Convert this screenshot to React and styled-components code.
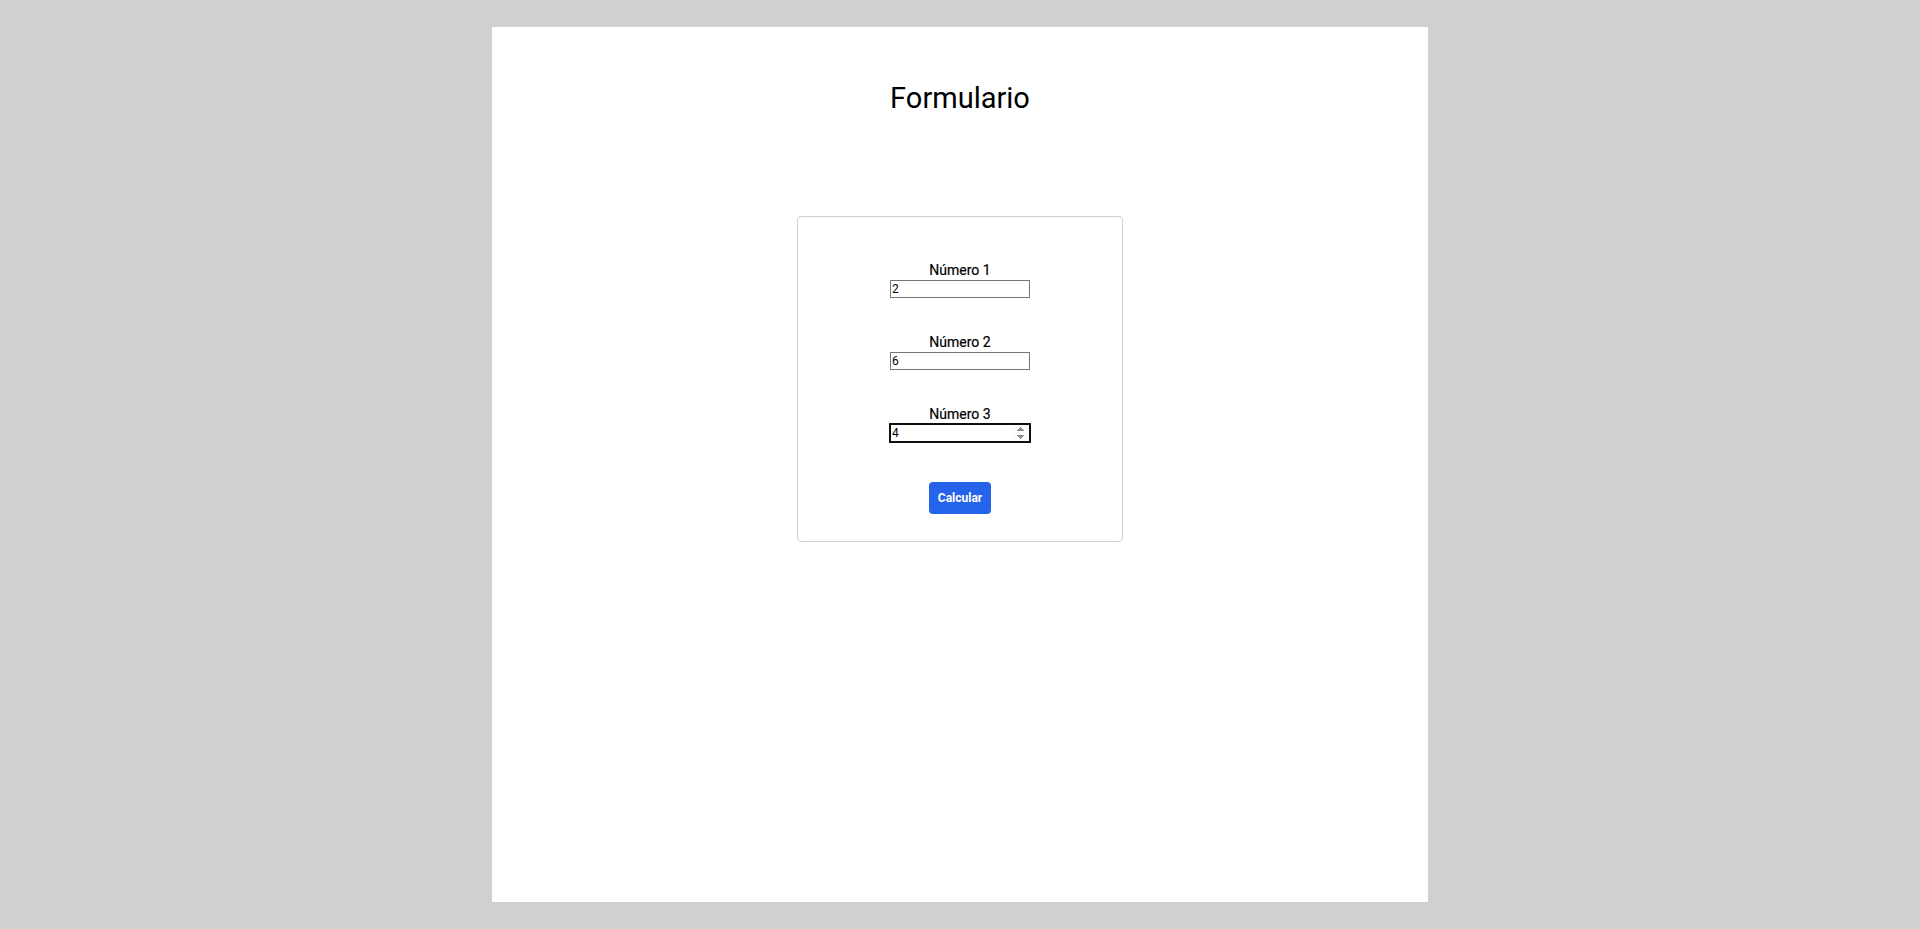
import React from 'react'
import styled, { createGlobalStyle } from 'styled-components'

const GlobalStyle = createGlobalStyle`
  html, body {
    margin: 0;
    padding: 0;
    background-color: #d0d0d0;
    font-family: Roboto, "Liberation Sans", Arial, sans-serif;
    color: #000;
  }
`

const Page = styled.div`
  box-sizing: border-box;
  width: 936px;
  height: calc(100vh - 54px);
  margin: 27px auto;
  background-color: #fff;
  display: flex;
  flex-direction: column;
  align-items: center;
  padding-top: 55px;
`

const Title = styled.h1`
  margin: 0;
  font-size: 29px;
  font-weight: 400;
  line-height: 33px;
`

const Card = styled.form`
  box-sizing: border-box;
  width: 326px;
  margin-top: 101px;
  border: 1px solid #cfcfcf;
  border-radius: 4px;
  padding: 44px 0 27px;
  display: flex;
  flex-direction: column;
  align-items: center;
  gap: 35px;
`

const Field = styled.div`
  display: flex;
  flex-direction: column;
  align-items: center;
`

const Label = styled.label`
  font-size: 14px;
  font-weight: 400;
  line-height: 19px;
  color: #000;
  -webkit-text-stroke: 0.2px #000;
`

const Input = styled.input`
  box-sizing: border-box;
  width: 140px;
  height: 18px;
  margin: 0;
  padding: 0 1px;
  border: 1px solid #767676;
  border-radius: 0;
  font-family: Roboto, "Liberation Sans", Arial, sans-serif;
  font-size: 12px;
  color: #000;
  background: #fff;
  outline: ${p => (p.$active ? '2px solid #101010' : 'none')};
  outline-offset: -1px;
`

const Button = styled.button`
  margin-top: 5px;
  height: 32px;
  padding: 0 9px;
  border: none;
  border-radius: 4px;
  background-color: #2563eb;
  color: #fff;
  font-family: Roboto, "Liberation Sans", Arial, sans-serif;
  font-size: 12px;
  font-weight: 700;
  cursor: pointer;
`

const fields = [
  { id: 'n1', label: 'Número 1', value: '2' },
  { id: 'n2', label: 'Número 2', value: '6' },
  { id: 'n3', label: 'Número 3', value: '4', active: true }
]

export default function App() {
  return (
    <>
      <GlobalStyle />
      <Page>
        <Title>Formulario</Title>
        <Card onSubmit={e => e.preventDefault()}>
          {fields.map(f => (
            <Field key={f.id}>
              <Label htmlFor={f.id}>{f.label}</Label>
              <Input
                id={f.id}
                type="number"
                defaultValue={f.value}
                $active={f.active}
                autoFocus={f.active}
              />
            </Field>
          ))}
          <Button type="submit">Calcular</Button>
        </Card>
      </Page>
    </>
  )
}
